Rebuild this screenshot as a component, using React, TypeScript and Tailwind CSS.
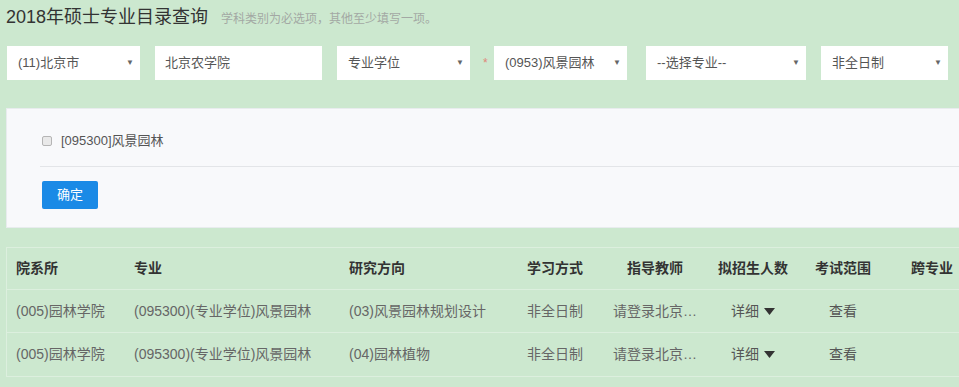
import React from 'react';

const FONT = { fontFamily: '"Liberation Sans", "Noto Sans CJK SC", sans-serif' };

function Select({ value, width }: { value: string; width: string }) {
  return (
    <div className={`${width} flex h-[34px] items-center justify-between bg-white pl-[11px] pr-[6px] text-[13px] text-[#555]`}>
      <span>{value}</span>
      <span className="text-[8px] text-[#666]">▼</span>
    </div>
  );
}

const cols = 'grid grid-cols-[117px_215px_178px_85px_106px_90px_90px_88px]';

const rows = [
  { dept: '(005)园林学院', major: '(095300)(专业学位)风景园林', dir: '(03)风景园林规划设计' },
  { dept: '(005)园林学院', major: '(095300)(专业学位)风景园林', dir: '(04)园林植物' },
];

export default function App() {
  return (
    <div className="min-h-[387px] w-full overflow-hidden bg-[#cce8cf]" style={FONT}>
      <div className="flex items-baseline pl-[6px] pt-[3px]">
        <h1 className="text-[18px] leading-[28px] text-[#333]">2018年硕士专业目录查询</h1>
        <span className="ml-[13px] text-[12px] text-[#a3a8a4]">学科类别为必选项，其他至少填写一项。</span>
      </div>

      <div className="mt-[15px] flex items-center pl-[7px]">
        <Select value="(11)北京市" width="w-[133px]" />
        <div className="ml-[15px] flex h-[34px] w-[167px] items-center bg-white pl-[10px] text-[13px] text-[#555]">北京农学院</div>
        <div className="ml-[15px]">
          <Select value="专业学位" width="w-[133px]" />
        </div>
        <span className="w-[24px] pl-[13px] text-[12px] text-[#e0877a]">*</span>
        <Select value="(0953)风景园林" width="w-[133px]" />
        <div className="ml-[19px]">
          <Select value="--选择专业--" width="w-[160px]" />
        </div>
        <div className="ml-[15px]">
          <Select value="非全日制" width="w-[127px]" />
        </div>
      </div>

      <div className="ml-[6px] mt-[28px] w-[1000px] border border-[#e8ecee] bg-[#f8f9fb] pb-[18px] pl-[33px] pt-[23px]">
        <div className="flex h-[18px] items-center pl-[2px]">
          <span className="h-[10px] w-[10px] rounded-[2px] border border-[#b5b5b5] bg-[#e9e9e9]" />
          <span className="ml-[9px] text-[13px] text-[#555]">[095300]风景园林</span>
        </div>
        <div className="mt-[16px] h-px bg-[#e3e5e8]" />
        <button className="ml-[2px] mt-[14px] flex h-[28px] w-[56px] items-center justify-center rounded-[2px] bg-[#1a8ae6] text-[13px] text-white">
          确定
        </button>
      </div>

      <div className="ml-[6px] mt-[19px] w-[1000px] border border-[#dcefde]">
        <div className={`${cols} h-[42px] items-center border-b border-[#dcefde] text-[14px] font-bold text-[#333]`}>
          <div className="pl-[9px]">院系所</div>
          <div className="pl-[10px]">专业</div>
          <div className="pl-[10px]">研究方向</div>
          <div className="pl-[10px]">学习方式</div>
          <div className="text-center">指导教师</div>
          <div className="text-center">拟招生人数</div>
          <div className="text-center">考试范围</div>
          <div className="text-center">跨专业</div>
        </div>
        {rows.map((r, i) => (
          <div
            key={i}
            className={`${cols} h-[43px] items-center text-[14px] text-[#666] ${i === 0 ? 'border-b border-[#dcefde]' : ''}`}
          >
            <div className="pl-[9px]">{r.dept}</div>
            <div className="pl-[10px]">{r.major}</div>
            <div className="pl-[10px]">{r.dir}</div>
            <div className="pl-[10px]">非全日制</div>
            <div className="text-center">请登录北京…</div>
            <div className="flex items-center justify-center gap-[5px] text-[#555]">
              详细
              <svg width="11" height="7" viewBox="0 0 11 7">
                <path d="M0 0h11L5.5 7z" fill="#333" />
              </svg>
            </div>
            <div className="text-center text-[#555]">查看</div>
            <div />
          </div>
        ))}
      </div>
    </div>
  );
}
